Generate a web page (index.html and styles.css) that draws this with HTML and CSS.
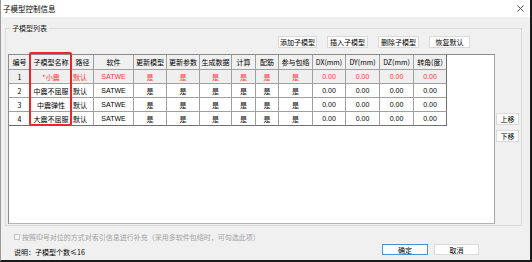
FILE: index.html
```html
<!DOCTYPE html>
<html lang="zh-CN">
<head>
  <meta charset="UTF-8">
  <title>子模型控制信息</title>
  <link rel="stylesheet" href="styles.css">
</head>
<body>

  <div class="window">
    <div class="titlebar">
      <span class="title">子模型控制信息</span>
      <svg class="close" width="7" height="7" viewBox="0 0 7 7">
        <path d="M0.5 0.5 L6.5 6.5 M6.5 0.5 L0.5 6.5" stroke="#555" stroke-width="1" fill="none"/>
      </svg>
    </div>

    <div class="content">
      <!-- Sub-model list group -->
      <fieldset class="group">
        <legend>子模型列表</legend>

        <div class="toolbar">
          <button class="btn tool wide">添加子模型</button>
          <button class="btn tool">插入子模型</button>
          <button class="btn tool">删除子模型</button>
          <button class="btn tool">恢复默认</button>
        </div>

        <div class="main">
          <div class="grid">
            <table class="models">
              <thead>
                <tr>
                  <th class="c-no">编号</th>
                  <th class="c-name">子模型名称</th>
                  <th class="c-path">路径</th>
                  <th class="c-soft">软件</th>
                  <th class="c-m">更新模型</th>
                  <th class="c-m">更新参数</th>
                  <th class="c-gen">生成数据</th>
                  <th class="c-calc">计算</th>
                  <th class="c-rein">配筋</th>
                  <th class="c-env">参与包络</th>
                  <th class="c-dx">DX(mm)</th>
                  <th class="c-dy">DY(mm)</th>
                  <th class="c-dy">DZ(mm)</th>
                  <th class="c-dx">转角(度)</th>
                </tr>
              </thead>
              <tbody>
                <tr class="active">
                  <td class="plain">1</td>
                  <td>*小震</td>
                  <td class="left">默认</td>
                  <td>SATWE</td>
                  <td>是</td><td>是</td><td>是</td><td>是</td><td>是</td><td>是</td>
                  <td>0.00</td><td>0.00</td><td>0.00</td><td>0.00</td>
                </tr>
                <tr>
                  <td>2</td>
                  <td>中震不屈服</td>
                  <td class="left">默认</td>
                  <td>SATWE</td>
                  <td>是</td><td>是</td><td>是</td><td>是</td><td>是</td><td>是</td>
                  <td>0.00</td><td>0.00</td><td>0.00</td><td>0.00</td>
                </tr>
                <tr>
                  <td>3</td>
                  <td>中震弹性</td>
                  <td class="left">默认</td>
                  <td>SATWE</td>
                  <td>是</td><td>是</td><td>是</td><td>是</td><td>是</td><td>是</td>
                  <td>0.00</td><td>0.00</td><td>0.00</td><td>0.00</td>
                </tr>
                <tr>
                  <td>4</td>
                  <td>大震不屈服</td>
                  <td class="left">默认</td>
                  <td>SATWE</td>
                  <td>是</td><td>是</td><td>是</td><td>是</td><td>是</td><td>是</td>
                  <td>0.00</td><td>0.00</td><td>0.00</td><td>0.00</td>
                </tr>
              </tbody>
            </table>

            <!-- red annotation around the name column -->
            <div class="mark"></div>
          </div>

          <div class="side">
            <button class="btn move">上移</button>
            <button class="btn move">下移</button>
          </div>
        </div>
      </fieldset>

      <div class="footer">
        <label class="check">
          <span class="box"></span>
          按照ID号对位的方式对索引信息进行补充（采用多软件包络时，可勾选此项）
        </label>
        <div class="footer-row">
          <span class="note">说明：子模型个数≤16</span>
          <div class="actions">
            <button class="btn action primary">确定</button>
            <button class="btn action">取消</button>
          </div>
        </div>
      </div>
    </div>
  </div>

</body>
</html>
```

FILE: styles.css
```css
html, body {
  margin: 0;
  padding: 0;
}

body {
  font-family: "Noto Sans CJK SC", "Liberation Sans", sans-serif;
  font-size: 7px;
  color: #000;
  background: #f0f0f0;
}

.window {
  width: 532px;
  height: 262px;
  box-sizing: border-box;
  border-left: 1px solid #9a9a9a;
  border-right: 2px solid #1a1a1a;
  border-bottom: 2px solid #1a1a1a;
  background: #f0f0f0;
  display: flex;
  flex-direction: column;
}

.titlebar {
  height: 17px;
  background: #fff;
  display: flex;
  align-items: center;
  justify-content: space-between;
  padding: 0 6px 0 2px;
}

.title {
  font-size: 7.5px;
  line-height: 10px;
}

.content {
  flex: 1;
}

/* Group box */
.group {
  margin: 6px 0 0 4px;
  width: 517px;
  box-sizing: border-box;
  padding: 0 0 1px 2px;
  border: 1px solid #dcdcdc;
  min-inline-size: 0;
}

.group legend {
  padding: 0 2px;
  margin-left: 2px;
  line-height: 10px;
  color: #222;
}

.toolbar {
  display: flex;
  justify-content: flex-end;
  gap: 10px;
  margin-top: 3px;
  padding-right: 51px;
  height: 12px;
}

.btn {
  font-family: inherit;
  font-size: 7px;
  padding: 0;
  margin: 0;
  background: #fdfdfd;
  border: 1px solid #dadada;
  color: #000;
  line-height: 10px;
  box-sizing: border-box;
}

.tool {
  width: 41px;
  height: 12px;
}

.tool.wide {
  width: 39px;
}

.main {
  display: flex;
  margin-top: 6px;
  height: 170px;
}

.grid {
  position: relative;
  width: 487px;
  height: 170px;
  box-sizing: border-box;
  background: #fff;
  border: 1px solid #8c8c8c;
  border-right-color: #a8a8a8;
  border-bottom-color: #b4b4b4;
}

.side {
  display: flex;
  flex-direction: column;
  gap: 5px;
  padding: 59px 0 0 1px;
}

.move {
  width: 23px;
  height: 12px;
}

/* Table */
.models {
  border-collapse: separate;
  border-spacing: 0;
  table-layout: fixed;
  width: 438px;
}

.models th,
.models td {
  box-sizing: border-box;
  padding: 0;
  border-right: 1px solid #a0a0a0;
  border-bottom: 1px solid #a0a0a0;
  text-align: center;
  white-space: nowrap;
  overflow: hidden;
  font-weight: normal;
  line-height: 10px;
}

.models th {
  height: 15px;
  background: #f0f0f0;
}

.models td {
  height: 14px;
}

.models td:last-child,
.models th:last-child {
  border-right-color: #707070;
}

.models tbody tr:last-child td {
  border-bottom-color: #707070;
}

.models td.left {
  text-align: left;
  padding-left: 1px;
}

.c-no { width: 22px; }
.c-name { width: 41px; }
.c-path { width: 22px; }
.c-soft { width: 40px; }
.c-m { width: 33px; }
.c-gen { width: 32px; }
.c-calc { width: 24px; }
.c-rein { width: 23px; }
.c-env { width: 34px; }
.c-dx { width: 33px; }
.c-dy { width: 34px; }

.models td:nth-child(n+11) {
  font-family: "Liberation Sans", sans-serif;
}

.models td:nth-child(4) {
  font-family: "Liberation Sans", sans-serif;
}

.active td {
  background: #efefef;
  color: #ff3535;
}

.active td.plain {
  color: #000;
}

.mark {
  position: absolute;
  left: 20px;
  top: -3px;
  width: 43px;
  height: 74px;
  box-sizing: border-box;
  border: 2px solid #e8262c;
  border-radius: 2px;
}

/* Footer */
.footer {
  padding: 0 51px 0 13px;
}

.check {
  display: flex;
  align-items: center;
  gap: 2px;
  margin-top: 6px;
  height: 10px;
  line-height: 10px;
  color: #a3a3a3;
}

.box {
  width: 6px;
  height: 6px;
  box-sizing: border-box;
  border: 1px solid #c4c4c4;
  background: #f7f7f7;
}

.footer-row {
  display: flex;
  justify-content: space-between;
  align-items: flex-start;
}

.note {
  margin-top: 5px;
  line-height: 10px;
}

.actions {
  display: flex;
  gap: 6px;
  margin-top: 2px;
}

.action {
  width: 45px;
  height: 11px;
}

.action.primary {
  width: 46px;
  border-color: #4a90d9;
}
```
